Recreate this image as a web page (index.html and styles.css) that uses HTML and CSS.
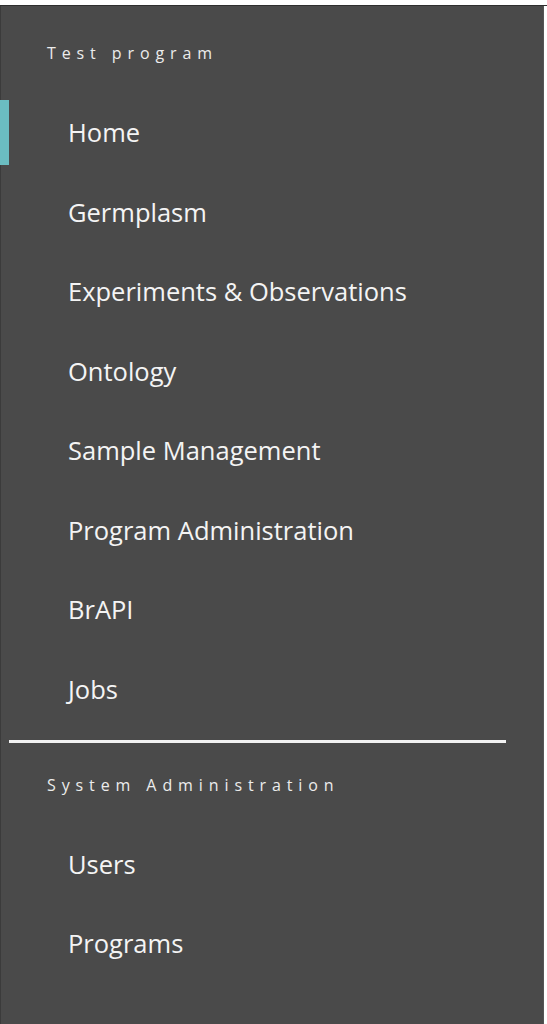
FILE: index.html
```html
<!DOCTYPE html>
<html>
<head>
<meta charset="utf-8">
<link rel="stylesheet" href="styles.css">
</head>
<body>
<div class="frame">
  <nav class="drawer">
    <div class="section-title first">Test program</div>
    <ul class="menu">
      <li class="item active">Home</li>
      <li class="item">Germplasm</li>
      <li class="item">Experiments &amp; Observations</li>
      <li class="item">Ontology</li>
      <li class="item">Sample Management</li>
      <li class="item">Program Administration</li>
      <li class="item">BrAPI</li>
      <li class="item">Jobs</li>
    </ul>
    <hr class="divider">
    <div class="section-title">System Administration</div>
    <ul class="menu">
      <li class="item">Users</li>
      <li class="item">Programs</li>
    </ul>
  </nav>
  <div class="gutter"></div>
</div>
</body>
</html>
```
FILE: styles.css
```css
html, body {
  margin: 0;
  padding: 0;
  background: #ffffff;
}
.frame {
  margin-top: 5px;
  border-top: 1px solid #2e2e2e;
  display: flex;
  height: 1018px;
}
.drawer {
  width: 542px;
  background: #4a4a4a;
  border-left: 1px solid #3b3b3b;
  font-family: "Open Sans", "Noto Sans", sans-serif;
  color: #f2f2f2;
  display: flex;
  flex-direction: column;
}
.gutter {
  flex: 1;
  background: #ffffff;
  border-left: 1px solid #555;
}
.section-title {
  padding-left: 46px;
  font-size: 16px;
  line-height: 24px;
  letter-spacing: 5.9px;
  color: #ececec;
  margin-top: 30px;
  margin-bottom: 35px;
}
.section-title.first {
  margin-top: 35px;
  margin-bottom: 35px;
}
.menu {
  list-style: none;
  margin: 0;
  padding: 0;
  display: flex;
  flex-direction: column;
  gap: 14.5px;
}
.item {
  height: 65px;
  line-height: 65px;
  padding-left: 67px;
  font-size: 25.5px;
  color: #f4f4f4;
}
.item.active {
  margin-left: -1px;
  border-left: 9px solid #6bbdc1;
  padding-left: 59px;
}
.divider {
  border: 0;
  height: 3px;
  background: #f2f2f2;
  margin: 18px 0 0 8px;
  width: 497px;
}
```
